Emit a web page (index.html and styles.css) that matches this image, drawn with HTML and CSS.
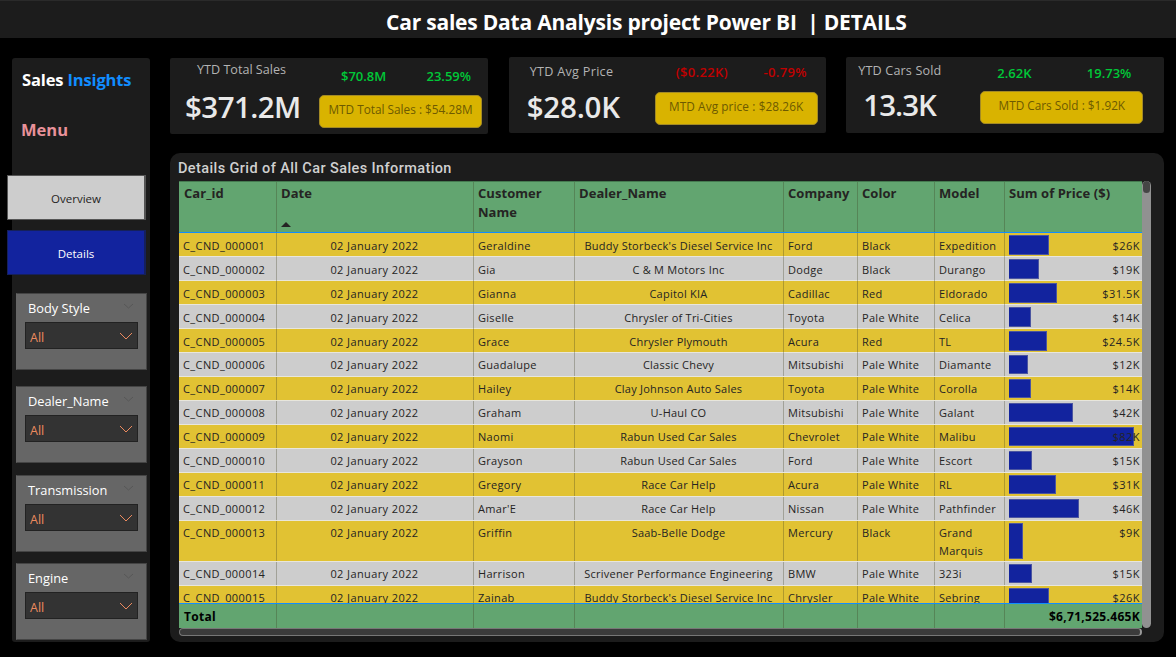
FILE: index.html
```html
<!DOCTYPE html>
<html lang="en">
<head>
<meta charset="utf-8">
<title>Car sales Data Analysis project Power BI | DETAILS</title>
<link rel="stylesheet" href="styles.css">
</head>
<body>
<header class="topbar"><h1>Car sales Data Analysis project Power BI&nbsp; | DETAILS</h1></header>
<div class="layout">
  <aside class="sidebar">
    <div class="brand">Sales <span>Insights</span></div>
    <div class="menu-title">Menu</div>
    <nav class="nav">
      <a class="nav-btn">Overview</a>
      <a class="nav-btn active">Details</a>
    </nav>
    <div class="slicers">
      <section class="slicer s1"><div class="slicer-head"><span>Body Style</span><svg width="11" height="6"><path d="M1 1l4.500 4L10 1"/></svg></div><div class="select"><span>All</span><svg width="14" height="8"><path d="M1 1l6 6 6-6"/></svg></div></section>
      <section class="slicer s2"><div class="slicer-head"><span>Dealer_Name</span><svg width="11" height="6"><path d="M1 1l4.500 4L10 1"/></svg></div><div class="select"><span>All</span><svg width="14" height="8"><path d="M1 1l6 6 6-6"/></svg></div></section>
      <section class="slicer s3"><div class="slicer-head"><span>Transmission</span><svg width="11" height="6"><path d="M1 1l4.500 4L10 1"/></svg></div><div class="select"><span>All</span><svg width="14" height="8"><path d="M1 1l6 6 6-6"/></svg></div></section>
      <section class="slicer s4"><div class="slicer-head"><span>Engine</span><svg width="11" height="6"><path d="M1 1l4.500 4L10 1"/></svg></div><div class="select"><span>All</span><svg width="14" height="8"><path d="M1 1l6 6 6-6"/></svg></div></section>
    </div>
  </aside>
  <main class="main">
    <div class="cards">
      <section class="card sales">
        <div class="kpi"><div class="label">YTD Total Sales</div><div class="value">$371.2M</div></div>
        <div class="side"><div class="deltas up"><span>$70.8M</span><span>23.59%</span></div><div class="mtd">MTD Total Sales : $54.28M</div></div>
      </section>
      <section class="card avg">
        <div class="kpi"><div class="label">YTD Avg Price</div><div class="value">$28.0K</div></div>
        <div class="side"><div class="deltas down"><span>($0.22K)</span><span>-0.79%</span></div><div class="mtd">MTD Avg price : $28.26K</div></div>
      </section>
      <section class="card sold">
        <div class="kpi"><div class="label">YTD Cars Sold</div><div class="value">13.3K</div></div>
        <div class="side"><div class="deltas up"><span>2.62K</span><span>19.73%</span></div><div class="mtd">MTD Cars Sold : $1.92K</div></div>
      </section>
    </div>
    <section class="panel">
      <h2>Details Grid of All Car Sales Information</h2>
      <div class="grid-wrap">
        <div class="table">
          <div class="row head"><div>Car_id</div><div class="sorted">Date<svg width="10" height="5"><path d="M0 5L5 0l5 5z"/></svg></div><div>Customer Name</div><div>Dealer_Name</div><div>Company</div><div>Color</div><div>Model</div><div>Sum of Price ($)</div></div>
          <div class="rows">
            <div class="row"><div>C_CND_000001</div><div>02 January 2022</div><div>Geraldine</div><div>Buddy Storbeck's Diesel Service Inc</div><div>Ford</div><div>Black</div><div>Expedition</div><div class="price"><i style="width:40px"></i><span>$26K</span></div></div>
            <div class="row"><div>C_CND_000002</div><div>02 January 2022</div><div>Gia</div><div>C &amp; M Motors Inc</div><div>Dodge</div><div>Black</div><div>Durango</div><div class="price"><i style="width:30px"></i><span>$19K</span></div></div>
            <div class="row"><div>C_CND_000003</div><div>02 January 2022</div><div>Gianna</div><div>Capitol KIA</div><div>Cadillac</div><div>Red</div><div>Eldorado</div><div class="price"><i style="width:48px"></i><span>$31.5K</span></div></div>
            <div class="row"><div>C_CND_000004</div><div>02 January 2022</div><div>Giselle</div><div>Chrysler of Tri-Cities</div><div>Toyota</div><div>Pale White</div><div>Celica</div><div class="price"><i style="width:22px"></i><span>$14K</span></div></div>
            <div class="row"><div>C_CND_000005</div><div>02 January 2022</div><div>Grace</div><div>Chrysler Plymouth</div><div>Acura</div><div>Red</div><div>TL</div><div class="price"><i style="width:38px"></i><span>$24.5K</span></div></div>
            <div class="row"><div>C_CND_000006</div><div>02 January 2022</div><div>Guadalupe</div><div>Classic Chevy</div><div>Mitsubishi</div><div>Pale White</div><div>Diamante</div><div class="price"><i style="width:19px"></i><span>$12K</span></div></div>
            <div class="row"><div>C_CND_000007</div><div>02 January 2022</div><div>Hailey</div><div>Clay Johnson Auto Sales</div><div>Toyota</div><div>Pale White</div><div>Corolla</div><div class="price"><i style="width:22px"></i><span>$14K</span></div></div>
            <div class="row"><div>C_CND_000008</div><div>02 January 2022</div><div>Graham</div><div>U-Haul CO</div><div>Mitsubishi</div><div>Pale White</div><div>Galant</div><div class="price"><i style="width:64px"></i><span>$42K</span></div></div>
            <div class="row"><div>C_CND_000009</div><div>02 January 2022</div><div>Naomi</div><div>Rabun Used Car Sales</div><div>Chevrolet</div><div>Pale White</div><div>Malibu</div><div class="price"><i style="width:125px"></i><span>$82K</span></div></div>
            <div class="row"><div>C_CND_000010</div><div>02 January 2022</div><div>Grayson</div><div>Rabun Used Car Sales</div><div>Ford</div><div>Pale White</div><div>Escort</div><div class="price"><i style="width:23px"></i><span>$15K</span></div></div>
            <div class="row"><div>C_CND_000011</div><div>02 January 2022</div><div>Gregory</div><div>Race Car Help</div><div>Acura</div><div>Pale White</div><div>RL</div><div class="price"><i style="width:47px"></i><span>$31K</span></div></div>
            <div class="row"><div>C_CND_000012</div><div>02 January 2022</div><div>Amar'E</div><div>Race Car Help</div><div>Nissan</div><div>Pale White</div><div>Pathfinder</div><div class="price"><i style="width:70px"></i><span>$46K</span></div></div>
            <div class="row tall"><div>C_CND_000013</div><div>02 January 2022</div><div>Griffin</div><div>Saab-Belle Dodge</div><div>Mercury</div><div>Black</div><div>Grand Marquis</div><div class="price"><i style="width:14px"></i><span>$9K</span></div></div>
            <div class="row"><div>C_CND_000014</div><div>02 January 2022</div><div>Harrison</div><div>Scrivener Performance Engineering</div><div>BMW</div><div>Pale White</div><div>323i</div><div class="price"><i style="width:23px"></i><span>$15K</span></div></div>
            <div class="row"><div>C_CND_000015</div><div>02 January 2022</div><div>Zainab</div><div>Buddy Storbeck's Diesel Service Inc</div><div>Chrysler</div><div>Pale White</div><div>Sebring</div><div class="price"><i style="width:40px"></i><span>$26K</span></div></div>
          </div>
          <div class="row total"><div>Total</div><div></div><div></div><div></div><div></div><div></div><div></div><div>$6,71,525.465K</div></div>
        </div>
        <div class="vscroll"><div></div></div>
        <div class="hscroll"></div>
      </div>
    </section>
  </main>
</div>
</body>
</html>
```

FILE: styles.css
```css
* { box-sizing: border-box; }
body { margin: 0; width: 1176px; height: 657px; overflow: hidden; background: #000; color: #e6e6e6; font-family: "Open Sans", "Noto Sans", sans-serif; }
h1, h2 { margin: 0; }
.topbar { height: 38px; background: #1c1c1c; border-top: 1px solid #2a2a2a; padding-left: 386px; }
h1 { font-size: 21px; font-weight: 700; letter-spacing: -.21px; line-height: 42px; color: #fff; white-space: pre; }
.layout { display: flex; gap: 20px; padding: 19px 12px 0 12px; }

.sidebar { flex: none; width: 138px; height: 584px; margin-top: 1px; background: #1c1c1c; border-radius: 3px; }
.brand { padding: 11px 0 0 10px; font-size: 16.5px; font-weight: 700; letter-spacing: -.15px; line-height: 22px; color: #fff; white-space: nowrap; }
.brand span { color: #118dff; }
.menu-title { padding: 28px 0 0 9px; font-size: 16.5px; font-weight: 700; line-height: 22px; color: #e8919a; }
.nav { display: flex; flex-direction: column; gap: 10px; margin: 34px 0 0 -5px; }
.nav-btn { width: 139px; height: 45px; display: flex; align-items: center; justify-content: center; padding-top: 1px; font-size: 11.5px; color: #252423; background: #cdcdcd; border: 1px solid #555; border-right-width: 2px; }
.nav-btn.active { color: #fff; background: #12239e; border-color: #15205c; }
.slicers { padding: 18px 0 0 4px; }
.slicer { width: 131px; height: 77px; background: #666; border: 1px solid #444; border-left-color: #666; padding: 4px 8px 0; }
.s2 { margin-top: 16px; }
.s3 { margin-top: 12px; }
.s4 { margin-top: 11px; }
.slicer-head { display: flex; justify-content: space-between; align-items: center; height: 20px; padding: 0 4px 0 3px; font-size: 12.8px; color: #fff; }
.slicer-head svg { fill: none; stroke: #575757; margin-top: -4px; }
.select { height: 27px; margin-top: 4px; padding: 4px 4px 0 4px; display: flex; align-items: center; justify-content: space-between; background: #333; border: 1px solid #222; color: #ec8a5e; font-size: 12.500px; }
.select svg { fill: none; stroke: #ec8a5e; margin-top: -3px; }

.main { flex: none; width: 994px; }
.cards { display: flex; gap: 20px; height: 96px; }
.card { width: 318px; height: 76px; background: #1c1c1c; border-radius: 2px; display: flex; }
.sales { margin-top: 1px; }
.avg { margin-left: 1px; }
.kpi { white-space: nowrap; }
.label { font-size: 12.600px; line-height: 18px; color: #b3b3b3; }
.value { font-size: 29.5px; font-weight: 600; letter-spacing: -.55px; line-height: 36px; color: #e9e9e9; }
.deltas { display: flex; justify-content: space-between; font-size: 13px; font-weight: 600; line-height: 18px; }
.up { color: #00c838; }
.down { color: #c00000; }
.mtd { height: 33px; border-radius: 5px; background: #d9b300; border: 1px solid #a38a25; text-align: center; font-size: 11.8px; line-height: 27px; color: #6d5a00; white-space: nowrap; }
.side { width: 163px; }
.sales .kpi { width: 149px; padding: 3px 0 0 15px; }
.sales .label { padding-left: 12px; }
.sales .value { padding-top: 10px; }
.sales .deltas { padding: 9px 11px 10px 22px; }
.avg .kpi { width: 146px; padding: 6px 0 0 18px; }
.avg .label { padding-left: 3px; letter-spacing: .3px; }
.avg .value { padding-top: 8px; letter-spacing: -.2px; }
.avg .deltas { padding: 6px 11px 11px 21px; letter-spacing: .3px; }
.avg .mtd { letter-spacing: .1px; }
.sold .kpi { width: 134px; padding: 5px 0 0 12px; }
.sold .label { letter-spacing: .15px; }
.sold .value { padding: 7px 0 0 5px; letter-spacing: -1px; }
.sold .deltas { padding: 7px 12px 9px 17px; }

.panel { width: 994px; height: 489px; background: #1c1c1c; border-radius: 10px; padding: 6px 12px 0 9px; }
h2 { height: 22px; margin-left: -1px; font-family: Roboto, sans-serif; font-size: 14.500px; font-weight: 500; letter-spacing: .4px; line-height: 19px; color: #d0d0d0; white-space: nowrap; }
.grid-wrap { display: grid; grid-template-columns: 963px 9px; grid-template-rows: 447px 8px; }
.row { display: grid; grid-template-columns: 97px 197px 101px 209px 74px 77px 70px 138px; height: 24px; font-size: 11px; letter-spacing: .3px; line-height: 18px; color: #252423; }
.row > div { padding: 4px 5px 0 4px; border-left: 1px solid rgba(60, 60, 30, .3); }
.row > div:first-child { border-left: 0; padding-left: 5px; }
.head { height: 52px; background: #62a570; border-top: 1px solid #457a50; border-bottom: 1px solid #118dff; font-size: 13px; font-weight: 700; letter-spacing: .05px; line-height: 19px; }
.head > div { padding-top: 2px; }
.head svg { fill: #252423; }
.sorted { display: flex; flex-direction: column; justify-content: space-between; padding-bottom: 5px !important; }
.rows { height: 370px; overflow: hidden; }
.rows .row { background: #cdcdcd; border-bottom: 1px solid #e8e6dc; }
.rows .row:nth-child(odd) { background: #e1c233; }
.rows .row:nth-child(n+6) > div { padding-top: 3px; }
.rows .row > :first-child { padding-left: 4px; letter-spacing: .4px; }
.rows .row > :nth-child(2) { text-align: center; letter-spacing: .4px; }
.rows .row > :nth-child(4) { text-align: center; letter-spacing: .24px; white-space: nowrap; }
.rows .row.tall { height: 41px; }
.rows .row > .price.price.price { display: grid; padding: 2px 2px 2px 4px; text-align: right; letter-spacing: .5px; }
.price i { grid-area: 1 / 1; background: #12239e; border: 1px solid #4b55a0; border-left: 0; }
.price span { grid-area: 1 / 1; padding-top: 2px; }
.row:nth-child(n+6) > .price span { padding-top: 1px; }
.total { height: 25px; background: #62a570; border-top: 1px solid #118dff; font-size: 12px; font-weight: 700; color: #000; letter-spacing: .3px; }
.total > div:last-child { text-align: right; padding-right: 2px; }
.vscroll { background: #919191; border-radius: 5px; padding: 0 1px; }
.vscroll div { height: 12px; border-radius: 4px; background: #454545; }
.hscroll { background: #3b3b3b; border: 1px solid #777; border-right: 2px solid #999; border-radius: 4px; }
```
